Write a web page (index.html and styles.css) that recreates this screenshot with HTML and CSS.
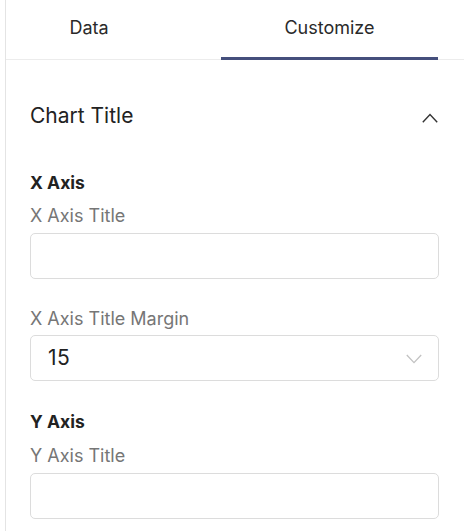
FILE: index.html
```html
<!DOCTYPE html>
<html>
<head>
<meta charset="utf-8">
<link rel="stylesheet" href="styles.css">
</head>
<body>
<div class="panel">
  <div class="tabs">
    <div class="tab tab-data">Data</div>
    <div class="tab-spacer"></div>
    <div class="tab tab-active">Customize</div>
  </div>
  <div class="content">
    <div class="section-header">
      <span class="section-title">Chart Title</span>
      <svg class="chev-up" width="16" height="10" viewBox="0 0 16 10"><path d="M0.8 9.2 L8 1.6 L15.2 9.2" fill="none" stroke="#333" stroke-width="1.4"/></svg>
    </div>
    <div class="group group-x">
      <div class="group-title">X Axis</div>
      <div class="label">X Axis Title</div>
      <div class="input"></div>
      <div class="label label-gap">X Axis Title Margin</div>
      <div class="input select">
        <span class="value">15</span>
        <svg class="chev-down" width="16" height="10" viewBox="0 0 16 10"><path d="M0.8 1 L8 8.6 L15.2 1" fill="none" stroke="#c2c2c2" stroke-width="1.3"/></svg>
      </div>
    </div>
    <div class="group group-y">
      <div class="group-title">Y Axis</div>
      <div class="label">Y Axis Title</div>
      <div class="input"></div>
    </div>
  </div>
</div>
</body>
</html>
```

FILE: styles.css
```css
html, body {
  margin: 0;
  padding: 0;
  background: #ffffff;
}
body {
  font-family: Inter, "Noto Sans", "Liberation Sans", sans-serif;
  color: #222222;
  height: 531px;
  overflow: hidden;
}
.panel {
  margin-left: 5px;
  border-left: 1px solid #e4e4e4;
  height: 531px;
}
.tabs {
  display: flex;
  height: 60px;
  box-sizing: border-box;
  border-bottom: 1px solid #ececec;
  padding: 0 26px 0 24px;
}
.tab {
  box-sizing: border-box;
  height: 60px;
  margin-bottom: -1px;
  padding-top: 17px;
  font-size: 18px;
  line-height: 22px;
  text-align: center;
  color: #2a2a2a;
  border-bottom: 3px solid transparent;
}
.tab-data {
  width: 118px;
}
.tab-spacer {
  flex: 1;
}
.tab-active {
  width: 217px;
  border-bottom-color: #454f7c;
}
.content {
  padding: 43px 25px 0 24px;
}
.section-header {
  display: flex;
  align-items: center;
  justify-content: space-between;
  height: 26px;
}
.section-title {
  font-size: 21px;
  line-height: 26px;
  color: #222222;
}
.chev-up {
  display: block;
  margin-top: 4px;
  margin-right: 1px;
}
.group-x {
  margin-top: 43px;
}
.group-y {
  margin-top: 30px;
}
.group-title {
  font-size: 17.5px;
  font-weight: 700;
  line-height: 22px;
  color: #222222;
}
.label {
  margin-top: 11px;
  font-size: 18px;
  line-height: 22px;
  color: #767676;
}
.group-y .label {
  margin-top: 12px;
}
.label-gap {
  margin-top: 29px;
}
.input {
  margin-top: 6px;
  height: 46px;
  box-sizing: border-box;
  border: 1px solid #dcdcdc;
  border-radius: 5px;
  background: #ffffff;
}
.select {
  margin-top: 5px;
  display: flex;
  align-items: center;
  justify-content: space-between;
  padding: 0 16px 0 17px;
}
.value {
  font-size: 21px;
  line-height: 26px;
  letter-spacing: 0.5px;
  color: #222222;
}
.chev-down {
  display: block;
  margin-top: 2px;
}
```
